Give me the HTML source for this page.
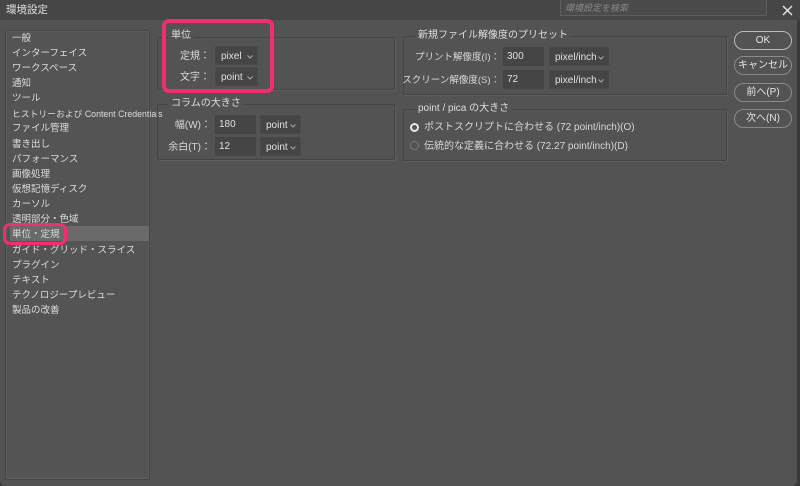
<!DOCTYPE html>
<html><head><meta charset="utf-8"><style>
*{box-sizing:border-box;margin:0;padding:0}
body{width:800px;height:486px;background:#3a3a3a;font-family:"Liberation Sans","Noto Sans CJK JP",sans-serif;font-size:10px;color:#d8d8d8;position:relative;overflow:hidden}
.win{position:absolute;left:0;top:0;width:797px;height:486px;background:#535353;border-radius:0 0 6px 6px}
.title{position:absolute;left:0;top:0;width:800px;height:20px;background:#464646}
.abs{position:absolute}
.list{left:5px;top:30px;width:145px;height:450px;border:1px solid #474747;background:#545454;box-shadow:inset 0 0 0 1px #5c5c5c}
.li{position:absolute;left:12px;font-size:9.5px;line-height:12px;color:#dcdcdc;white-space:nowrap}
.grp{border:1px solid #454545;box-shadow:1px 1px 0 #5e5e5e;border-radius:2px}
.leg{position:absolute;background:#535353;padding:0 3px;font-size:10px;line-height:12px;color:#dedede}
.sel{position:absolute;height:19px;line-height:19px;background:#454545;border:1px solid #4a4a4a;font-size:10px;padding:0 0 0 5px;color:#e0e0e0}
.sel svg{position:absolute;right:4px;top:8px}
.inp{position:absolute;height:19px;line-height:19px;background:#454545;font-size:10px;padding:0 0 0 4px;color:#e0e0e0}
.lbl{position:absolute;font-size:10px;line-height:12px;color:#d8d8d8;text-align:right;white-space:nowrap}
.btn{position:absolute;left:734px;width:58px;border:1px solid #8a8a8a;border-radius:10px;text-align:center;font-size:10px;color:#e6e6e6}
.pink{position:absolute;border:4px solid #f0306e;border-radius:7px}
</style></head><body>
<div class="win"></div>
<div class="title"></div>
<div class="abs" style="left:6px;top:4px;font-size:10.5px;line-height:12px;color:#e0e0e0">環境設定</div>
<div class="abs" style="left:560px;top:0;width:207px;height:16px;background:#4b4b4b;border:1px solid #5e5e5e;border-top:none"></div>
<div class="abs" style="left:565px;top:3px;font-size:9px;line-height:10px;color:#8a8a8a;font-style:italic">環境設定を検索</div>
<svg class="abs" style="left:782px;top:5px" width="11" height="11"><path d="M1 1L10 10M10 1L1 10" stroke="#e0e0e0" stroke-width="1.5"/></svg>

<div class="abs list"></div>
<div class="abs" style="left:10px;top:226px;width:139px;height:15px;background:#6a6a6a"></div>
<div class="li" style="top:33px">一般</div>
<div class="li" style="top:48px">インターフェイス</div>
<div class="li" style="top:63px">ワークスペース</div>
<div class="li" style="top:78px">通知</div>
<div class="li" style="top:93px">ツール</div>
<div class="li" style="top:108px;font-size:8.8px">ヒストリーおよび Content Credentials</div>
<div class="li" style="top:123px">ファイル管理</div>
<div class="li" style="top:139px">書き出し</div>
<div class="li" style="top:154px">パフォーマンス</div>
<div class="li" style="top:169px">画像処理</div>
<div class="li" style="top:184px">仮想記憶ディスク</div>
<div class="li" style="top:199px">カーソル</div>
<div class="li" style="top:214px">透明部分・色域</div>
<div class="li" style="top:229px">単位・定規</div>
<div class="li" style="top:245px">ガイド・グリッド・スライス</div>
<div class="li" style="top:260px">プラグイン</div>
<div class="li" style="top:275px">テキスト</div>
<div class="li" style="top:290px">テクノロジープレビュー</div>
<div class="li" style="top:305px">製品の改善</div>
<div class="pink" style="left:3px;top:223px;width:64px;height:22px;border-width:3px"></div>

<!-- units -->
<div class="abs grp" style="left:157px;top:37px;width:238px;height:53px"></div>
<div class="leg" style="left:168px;top:30px">単位</div>
<div class="lbl" style="right:590px;top:51px">定規：</div>
<div class="sel" style="left:215px;top:46px;width:43px">pixel<svg width="6" height="4"><path d="M0.5 0.5L3 3L5.5 0.5" stroke="#aaa" fill="none"/></svg></div>
<div class="lbl" style="right:590px;top:72px">文字：</div>
<div class="sel" style="left:215px;top:67px;width:43px">point<svg width="6" height="4"><path d="M0.5 0.5L3 3L5.5 0.5" stroke="#aaa" fill="none"/></svg></div>
<div class="pink" style="left:162px;top:19px;width:112px;height:74px"></div>

<div class="abs grp" style="left:157px;top:104px;width:238px;height:56px"></div>
<div class="leg" style="left:168px;top:98px">コラムの大きさ</div>
<div class="lbl" style="right:589px;top:120px">幅(W)：</div>
<div class="inp" style="left:215px;top:115px;width:41px">180</div>
<div class="sel" style="left:260px;top:115px;width:41px">point<svg width="6" height="4"><path d="M0.5 0.5L3 3L5.5 0.5" stroke="#aaa" fill="none"/></svg></div>
<div class="lbl" style="right:589px;top:142px">余白(T)：</div>
<div class="inp" style="left:215px;top:137px;width:41px">12</div>
<div class="sel" style="left:260px;top:137px;width:41px">point<svg width="6" height="4"><path d="M0.5 0.5L3 3L5.5 0.5" stroke="#aaa" fill="none"/></svg></div>

<!-- right -->
<div class="abs grp" style="left:403px;top:36px;width:324px;height:59px"></div>
<div class="leg" style="left:415px;top:30px">新規ファイル解像度のプリセット</div>
<div class="lbl" style="right:300px;top:52px;font-size:9.5px">プリント解像度(I)：</div>
<div class="inp" style="left:503px;top:47px;width:41px">300</div>
<div class="sel" style="left:549px;top:47px;width:60px">pixel/inch<svg width="6" height="4"><path d="M0.5 0.5L3 3L5.5 0.5" stroke="#aaa" fill="none"/></svg></div>
<div class="lbl" style="right:300px;top:75px;font-size:9.5px">スクリーン解像度(S)：</div>
<div class="inp" style="left:503px;top:70px;width:41px">72</div>
<div class="sel" style="left:549px;top:70px;width:60px">pixel/inch<svg width="6" height="4"><path d="M0.5 0.5L3 3L5.5 0.5" stroke="#aaa" fill="none"/></svg></div>

<div class="abs grp" style="left:403px;top:109px;width:324px;height:52px"></div>
<div class="leg" style="left:415px;top:103px">point / pica の大きさ</div>
<div class="abs" style="left:410px;top:123px;width:9px;height:9px;border-radius:50%;background:#555;border:2.5px solid #e8e8e8"></div>
<div class="lbl" style="left:424px;top:122px">ポストスクリプトに合わせる (72 point/inch)(O)</div>
<div class="abs" style="left:410px;top:141px;width:9px;height:9px;border-radius:50%;border:1px solid #777"></div>
<div class="lbl" style="left:424px;top:141px">伝統的な定義に合わせる (72.27 point/inch)(D)</div>

<div class="btn" style="top:31px;height:19px;line-height:17px;border-color:#bbb;border-width:1.5px">OK</div>
<div class="btn" style="top:56px;height:19px;line-height:17px">キャンセル</div>
<div class="btn" style="top:83px;height:19px;line-height:17px">前へ(P)</div>
<div class="btn" style="top:109px;height:19px;line-height:17px">次へ(N)</div>
</body></html>
